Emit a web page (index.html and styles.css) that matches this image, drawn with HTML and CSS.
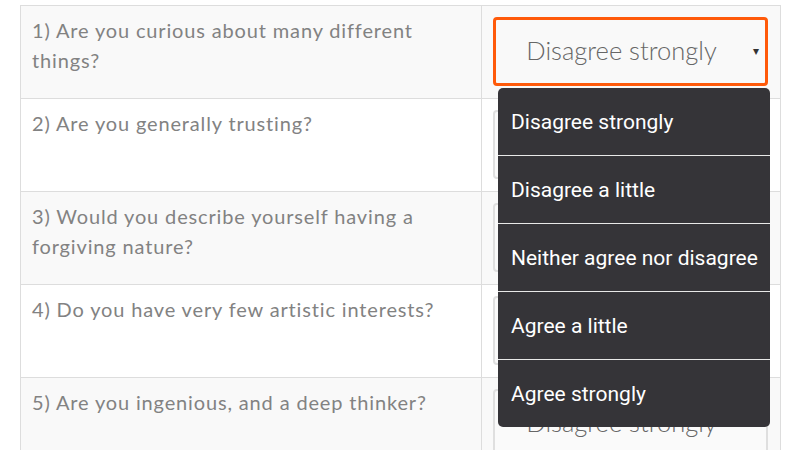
FILE: index.html
```html
<!DOCTYPE html>
<html>
<head>
<meta charset="utf-8">
<link rel="stylesheet" href="styles.css">
</head>
<body>
<div class="wrap">
  <table class="survey">
    <tr class="odd">
      <td class="q">1) Are you curious about many different things?</td>
      <td class="a">
        <div class="select focused"><span class="val">Disagree strongly</span><span class="arrow">▾</span></div>
        <ul class="menu">
          <li>Disagree strongly</li>
          <li>Disagree a little</li>
          <li>Neither agree nor disagree</li>
          <li>Agree a little</li>
          <li>Agree strongly</li>
        </ul>
      </td>
    </tr>
    <tr>
      <td class="q">2) Are you generally trusting?</td>
      <td class="a"><div class="select"><span class="val">Disagree strongly</span><span class="arrow">▾</span></div></td>
    </tr>
    <tr class="odd">
      <td class="q">3) Would you describe yourself having a forgiving nature?</td>
      <td class="a"><div class="select"><span class="val">Disagree strongly</span><span class="arrow">▾</span></div></td>
    </tr>
    <tr>
      <td class="q">4) Do you have very few artistic interests?</td>
      <td class="a"><div class="select"><span class="val">Disagree strongly</span><span class="arrow">▾</span></div></td>
    </tr>
    <tr class="odd">
      <td class="q">5) Are you ingenious, and a deep thinker?</td>
      <td class="a"><div class="select"><span class="val">Disagree strongly</span><span class="arrow">▾</span></div></td>
    </tr>
  </table>
</div>
</body>
</html>
```

FILE: styles.css
```css
html, body {
  margin: 0;
  padding: 0;
  background: #ffffff;
  overflow: hidden;
  height: 450px;
}
.wrap {
  padding: 5px 20px 0 20px;
}
.survey {
  border-collapse: collapse;
  width: 761px;
  table-layout: fixed;
  font-family: "Lato", "Open Sans", sans-serif;
}
.survey tr {
  height: 93px;
  background: #ffffff;
}
.survey tr.odd {
  background: #f9f9f9;
}
.survey td {
  border: 1px solid #dddddd;
  vertical-align: top;
  box-sizing: border-box;
}
.q {
  width: 461px;
  padding: 9px 11px 0 11px;
  font-size: 20px;
  letter-spacing: 0.85px;
  line-height: 30px;
  font-weight: 400;
  color: #828282;
}
.a {
  position: relative;
  padding: 11px 12px 0 11px;
}
.select {
  height: 69px;
  box-sizing: border-box;
  border: 2px solid #dfdfdf;
  border-radius: 4px;
  background: #fafafa;
  display: flex;
  align-items: center;
  justify-content: center;
  position: relative;
  padding-right: 18px;
  padding-bottom: 3px;
}
.select.focused {
  border: 3px solid #ff5a0a;
  background: #f9f9f9;
}
.val {
  font-size: 25.5px;
  font-weight: 300;
  color: #666666;
}
.arrow {
  position: absolute;
  right: 6px;
  top: 50%;
  transform: translateY(-55%);
  font-size: 12px;
  color: #333333;
  font-family: "DejaVu Sans", sans-serif;
}
.menu {
  position: absolute;
  left: 16px;
  top: 82px;
  width: 272px;
  margin: 0;
  padding: 0;
  list-style: none;
  background: #353438;
  border-radius: 5px;
  z-index: 5;
  overflow: hidden;
}
.menu li {
  height: 67px;
  display: flex;
  align-items: center;
  padding-left: 13px;
  font-family: "Roboto", sans-serif;
  font-size: 21px;
  color: #ffffff;
  border-top: 1px solid #e8e8e8;
}
.menu li:first-child {
  border-top: none;
}
```
